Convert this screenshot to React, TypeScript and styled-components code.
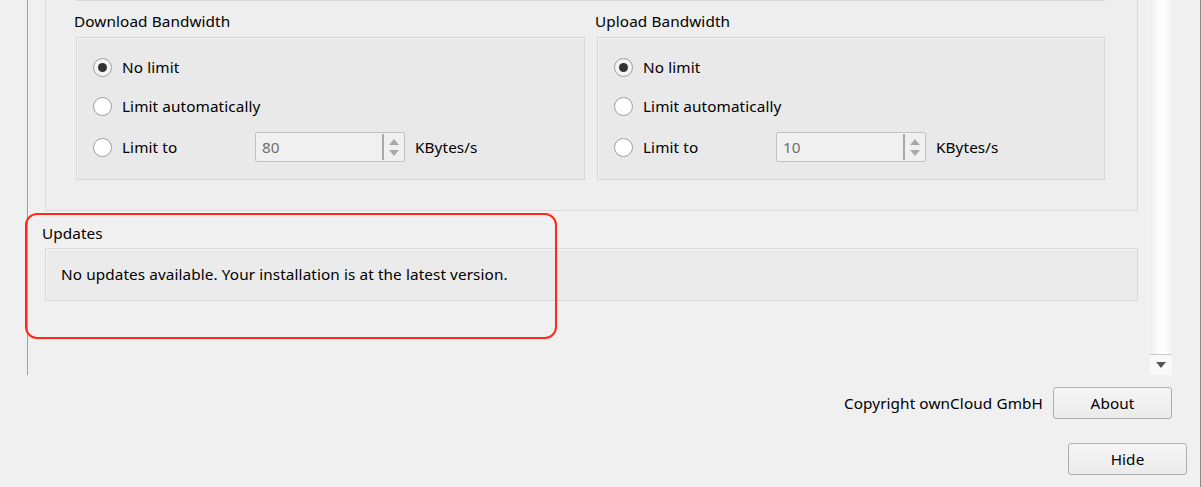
import React from "react";
import styled, { createGlobalStyle } from "styled-components";

const GlobalStyle = createGlobalStyle`
  html, body { margin: 0; padding: 0; background: #f0f0f0; }
  body {
    font-family: "Noto Sans", "Open Sans", sans-serif;
    font-size: 15.3px;
    letter-spacing: 0.1px;
    color: #000;
  }
  * { box-sizing: border-box; }
`;

const Page = styled.div`
  position: relative;
  width: 1201px;
  height: 487px;
  background: #f0f0f0;
  border-right: 1px solid #8a8a8a;
  display: flex;
  flex-direction: column;
  overflow: hidden;
`;

const TopArea = styled.div`
  display: flex;
  height: 375px;
  padding-left: 27px;
`;

const ScrollFrame = styled.div`
  width: 1123px;
  height: 100%;
  border-left: 1px solid #a0a0a0;
  padding-left: 17px;
  display: flex;
  flex-direction: column;
`;

const Scrollbar = styled.div`
  width: 22px;
  height: 100%;
  display: flex;
  flex-direction: column;
`;

const ScrollTrack = styled.div`
  flex: 1;
  background: linear-gradient(to right, #ececec 0%, #f8f8f8 25%, #fefefe 50%, #fbfbfb 75%, #f2f2f2 100%);
`;

const ScrollButton = styled.div`
  height: 21px;
  border-top: 1px solid #c9c9c9;
  background: #f8f8f8;
  display: flex;
  align-items: center;
  justify-content: center;
`;

const OuterGroup = styled.div`
  width: 1093px;
  height: 211px;
  border: 1px solid #d9d9d9;
  border-top: none;
  background: #eeeeee;
  display: flex;
  flex-direction: column;
  padding-left: 30px;
`;

const PrevBoxEdge = styled.div`
  width: 1029px;
  height: 1px;
  background: #d9d9d9;
`;

const Columns = styled.div`
  display: flex;
  gap: 12px;
`;

const Column = styled.div`
  display: flex;
  flex-direction: column;
  width: ${(p: { $w: number }) => p.$w}px;
`;

const GroupTitle = styled.div`
  height: 20px;
  line-height: 20px;
  margin: 10px 0 6px -2px;
  white-space: nowrap;
`;

const InnerBox = styled.div`
  height: 143px;
  border: 1px solid #d6d6d6;
  box-shadow: inset 1px 1px 0 #f4f4f4;
  background: #e9e9e9;
  padding: 16px 0 0 16px;
  display: flex;
  flex-direction: column;
  gap: 13px;
`;

const Row = styled.div`
  display: flex;
  align-items: center;
  height: ${(p: { $h: number }) => p.$h}px;
`;

const RadioLabel = styled.label`
  display: flex;
  align-items: center;
  gap: 10px;
  width: ${(p: { $w?: number }) => (p.$w ? `${p.$w}px` : "auto")};
  white-space: nowrap;
`;

const RadioCircle = styled.span<{ $checked?: boolean }>`
  width: 19px;
  height: 19px;
  border-radius: 50%;
  border: 1px solid #9e9e9e;
  background: ${(p) => (p.$checked ? "#f4f4f4" : "#ffffff")};
  display: flex;
  align-items: center;
  justify-content: center;
  flex-shrink: 0;
  &::after {
    content: "";
    display: ${(p) => (p.$checked ? "block" : "none")};
    width: 9px;
    height: 9px;
    border-radius: 50%;
    background: #333333;
  }
`;

const SpinBox = styled.div`
  width: 150px;
  height: 30px;
  border: 1px solid #c2c2c2;
  border-radius: 2px;
  background: #f0f0f0;
  display: flex;
  margin-right: 10px;
`;

const SpinValue = styled.div`
  flex: 1;
  padding-left: 6px;
  display: flex;
  align-items: center;
  color: #6f6f6f;
  border-right: 2px solid #a9a9a9;
  margin: 1px 0;
`;

const SpinArrows = styled.div`
  width: 20px;
  display: flex;
  flex-direction: column;
  align-items: center;
  justify-content: center;
  gap: 5px;
`;

const Triangle = styled.span<{ $up?: boolean; $color: string; $w: number; $h: number }>`
  width: 0;
  height: 0;
  border-left: ${(p) => p.$w / 2}px solid transparent;
  border-right: ${(p) => p.$w / 2}px solid transparent;
  ${(p) =>
    p.$up
      ? `border-bottom: ${p.$h}px solid ${p.$color};`
      : `border-top: ${p.$h}px solid ${p.$color};`}
`;

const UpdatesTitle = styled.div`
  height: 20px;
  line-height: 20px;
  margin: 12px 0 5px -3px;
`;

const UpdatesBox = styled.div`
  width: 1093px;
  height: 53px;
  border: 1px solid #d9d9d9;
  box-shadow: inset 1px 1px 0 #f4f4f4;
  background: #ebebeb;
  padding-left: 15px;
  padding-bottom: 1px;
  display: flex;
  align-items: center;
`;

const Annotation = styled.div`
  position: absolute;
  left: 25px;
  top: 213px;
  width: 532px;
  height: 126px;
  border: 2.5px solid #fb2b1b;
  border-radius: 12px;
  pointer-events: none;
`;

const BottomArea = styled.div`
  display: flex;
  flex-direction: column;
  align-items: flex-end;
  padding-top: 12px;
  gap: 24px;
`;

const FooterRow = styled.div<{ $right: number }>`
  display: flex;
  align-items: center;
  gap: 10px;
  margin-right: ${(p) => p.$right}px;
`;

const Button = styled.button`
  width: 119px;
  height: 32px;
  border: 1px solid #adadad;
  border-radius: 3px;
  background: linear-gradient(#f5f5f5, #ebebeb);
  font-family: inherit;
  font-size: inherit;
  letter-spacing: inherit;
  color: #000;
  padding: 0;
`;

type BandwidthProps = { title: string; value: string; width: number };

function BandwidthGroup({ title, value, width }: BandwidthProps) {
  return (
    <Column $w={width}>
      <GroupTitle>{title}</GroupTitle>
      <InnerBox>
        <Row $h={26}>
          <RadioLabel>
            <RadioCircle $checked />
            No limit
          </RadioLabel>
        </Row>
        <Row $h={26}>
          <RadioLabel>
            <RadioCircle />
            Limit automatically
          </RadioLabel>
        </Row>
        <Row $h={30}>
          <RadioLabel $w={162}>
            <RadioCircle />
            Limit to
          </RadioLabel>
          <SpinBox>
            <SpinValue>{value}</SpinValue>
            <SpinArrows>
              <Triangle $up $color="#a8a8a8" $w={10} $h={6} />
              <Triangle $color="#a8a8a8" $w={10} $h={6} />
            </SpinArrows>
          </SpinBox>
          KBytes/s
        </Row>
      </InnerBox>
    </Column>
  );
}

export default function App() {
  return (
    <>
      <GlobalStyle />
      <Page>
        <TopArea>
          <ScrollFrame>
            <OuterGroup>
              <PrevBoxEdge />
              <Columns>
                <BandwidthGroup title="Download Bandwidth" value="80" width={509} />
                <BandwidthGroup title="Upload Bandwidth" value="10" width={508} />
              </Columns>
            </OuterGroup>
            <UpdatesTitle>Updates</UpdatesTitle>
            <UpdatesBox>No updates available. Your installation is at the latest version.</UpdatesBox>
          </ScrollFrame>
          <Scrollbar>
            <ScrollTrack />
            <ScrollButton>
              <Triangle $color="#555555" $w={11} $h={6} />
            </ScrollButton>
          </Scrollbar>
        </TopArea>
        <BottomArea>
          <FooterRow $right={28}>
            <span>Copyright ownCloud GmbH</span>
            <Button>About</Button>
          </FooterRow>
          <FooterRow $right={13}>
            <Button>Hide</Button>
          </FooterRow>
        </BottomArea>
        <Annotation />
      </Page>
    </>
  );
}
